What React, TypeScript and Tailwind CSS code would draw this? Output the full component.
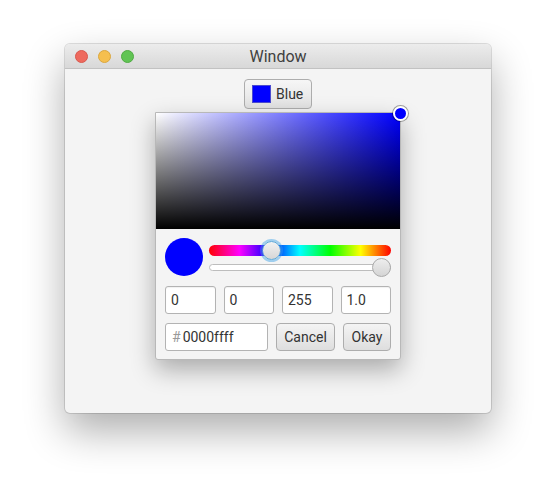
export default function App() {
  const fields = ["0", "0", "255", "1.0"];

  return (
    <div className="w-[557px] h-[500px] bg-white pt-[44px] pl-[65px] font-['Roboto',sans-serif]">
      <div className="w-[426px] h-[369px] rounded-[5px] bg-[#f4f4f4] flex flex-col shadow-[0_18px_40px_rgba(0,0,0,0.32),0_0_0_1px_rgba(0,0,0,0.12)]">
        {/* title bar */}
        <div className="relative h-[25px] rounded-t-[5px] bg-gradient-to-b from-[#ececec] to-[#d8d8d8] border-b border-[#c2c2c2] flex items-center justify-center">
          <div className="absolute left-[10px] top-[6px] flex gap-[10px]">
            <span className="w-[13px] h-[13px] rounded-full bg-[#ee6a5e] border border-[#d9584d]" />
            <span className="w-[13px] h-[13px] rounded-full bg-[#f5bf4f] border border-[#dba73e]" />
            <span className="w-[13px] h-[13px] rounded-full bg-[#61c454] border border-[#50ab43]" />
          </div>
          <span className="text-[16px] text-[#404040] leading-none pt-[2px]">Window</span>
        </div>

        {/* content */}
        <div className="flex flex-col items-center pt-[10px]">
          <button className="w-[68px] h-[30px] rounded-[4px] border border-[#adadad] bg-gradient-to-b from-[#f6f6f6] to-[#e2e2e2] flex items-center gap-[5px] pl-[7px]">
            <span className="w-[19px] h-[18px] bg-[#0000ff] border border-[#4b4bd0]" />
            <span className="text-[14px] text-[#333]">Blue</span>
          </button>

          <div className="mt-[3px] w-[246px] h-[248px] bg-[#f4f4f4] border border-[#b8b8b8] rounded-b-[3px] shadow-[0_10px_24px_rgba(0,0,0,0.3)] flex flex-col">
            {/* saturation / value area */}
            <div className="relative h-[116px] bg-[linear-gradient(to_top,#000,transparent),linear-gradient(to_right,#fff,#0000ff)]">
              <span className="absolute -right-[8px] -top-[7px] w-[15px] h-[15px] rounded-full bg-[#0000ff] border-2 border-white shadow-[0_0_0_1px_rgba(0,0,0,0.35)]" />
            </div>

            <div className="flex flex-col gap-[9px] px-[9px] pt-[9px]">
              <div className="flex items-center gap-[6px]">
                <span className="w-[38px] h-[38px] rounded-full bg-[#0000ff] shrink-0" />
                <div className="flex-1 flex flex-col gap-[8px] pt-[1px]">
                  <div className="relative h-[11px] rounded-full bg-[linear-gradient(to_right,#ff0000,#ff00ff_16.7%,#0000ff_33.3%,#00ffff_50%,#00ff00_66.7%,#ffff00_83.3%,#ff0000)]">
                    <span className="absolute left-[53px] -top-[4px] w-[19px] h-[19px] rounded-full bg-gradient-to-b from-[#f2f2f2] to-[#d6d6d6] border border-[#5aa7d8] shadow-[0_0_0_2px_rgba(56,160,230,0.45)]" />
                  </div>
                  <div className="relative h-[7px] rounded-full bg-white border border-[#bdbdbd]">
                    <span className="absolute -right-[1px] -top-[7px] w-[19px] h-[19px] rounded-full bg-gradient-to-b from-[#eeeeee] to-[#d4d4d4] border border-[#a9a9a9]" />
                  </div>
                </div>
              </div>

              <div className="grid grid-cols-4 gap-[8px] mt-[1px]">
                {fields.map((f, i) => (
                  <div key={i} className="h-[28px] rounded-[3px] bg-white border border-[#b3b3b3] flex items-center px-[5px] text-[14px] text-[#333] shadow-[inset_0_1px_1px_rgba(0,0,0,0.06)]">
                    {f}
                  </div>
                ))}
              </div>

              <div className="flex items-center">
                <div className="w-[103px] h-[28px] rounded-[3px] bg-white border border-[#b3b3b3] flex items-center px-[6px] text-[14px] text-[#333]">
                  <span className="text-[#999] mr-[2px]">#</span>0000ffff
                </div>
                <button className="ml-[8px] w-[59px] h-[28px] rounded-[4px] border border-[#adadad] bg-gradient-to-b from-[#f4f4f4] to-[#dedede] text-[14px] text-[#333] flex items-center justify-center">
                  Cancel
                </button>
                <button className="ml-[8px] w-[48px] h-[28px] rounded-[4px] border border-[#adadad] bg-gradient-to-b from-[#f4f4f4] to-[#dedede] text-[14px] text-[#333] flex items-center justify-center">
                  Okay
                </button>
              </div>
            </div>
          </div>
        </div>
      </div>
    </div>
  );
}
